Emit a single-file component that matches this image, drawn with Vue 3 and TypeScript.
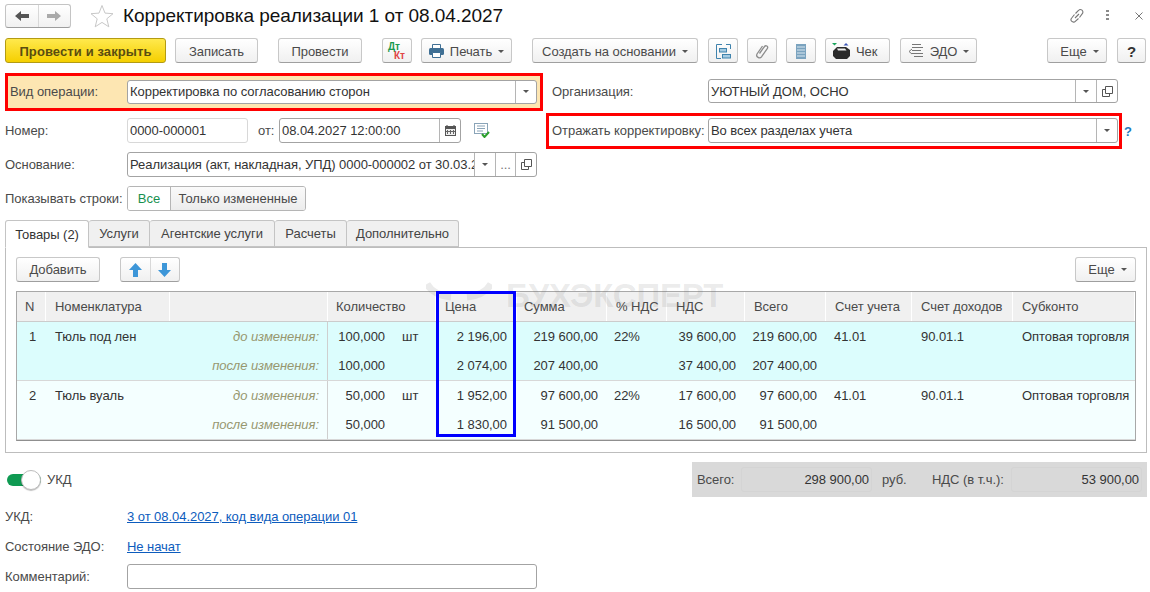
<script setup lang="ts">
interface Line {
  mark: string
  qty: string
  unit: string
  price: string
  sum: string
  rate: string
  vat: string
  total: string
  acc: string
  inc: string
  sub: string
}

const headers = ['N', 'Номенклатура', '', 'Количество', 'Цена', 'Сумма', '% НДС', 'НДС', 'Всего', 'Счет учета', 'Счет доходов', 'Субконто']

const rows: { n: string; name: string; lines: Line[] }[] = [
  {
    n: '1',
    name: 'Тюль под лен',
    lines: [
      { mark: 'до изменения:', qty: '100,000', unit: 'шт', price: '2 196,00', sum: '219 600,00', rate: '22%', vat: '39 600,00', total: '219 600,00', acc: '41.01', inc: '90.01.1', sub: 'Оптовая торговля' },
      { mark: 'после изменения:', qty: '100,000', unit: '', price: '2 074,00', sum: '207 400,00', rate: '', vat: '37 400,00', total: '207 400,00', acc: '', inc: '', sub: '' },
    ],
  },
  {
    n: '2',
    name: 'Тюль вуаль',
    lines: [
      { mark: 'до изменения:', qty: '50,000', unit: 'шт', price: '1 952,00', sum: '97 600,00', rate: '22%', vat: '17 600,00', total: '97 600,00', acc: '41.01', inc: '90.01.1', sub: 'Оптовая торговля' },
      { mark: 'после изменения:', qty: '50,000', unit: '', price: '1 830,00', sum: '91 500,00', rate: '', vat: '16 500,00', total: '91 500,00', acc: '', inc: '', sub: '' },
    ],
  },
]

const tabs = ['Товары (2)', 'Услуги', 'Агентские услуги', 'Расчеты', 'Дополнительно']
</script>

<template>
  <div class="page">
    <header class="title-row">
      <div class="nav">
        <button class="nav-btn">
          <svg width="14" height="12" viewBox="0 0 14 12"><path d="M0 6 6 1v3h8v4H6v3z" fill="#555" /></svg>
        </button>
        <button class="nav-btn">
          <svg width="14" height="12" viewBox="0 0 14 12"><path d="M14 6 8 1v3H0v4h8v3z" fill="#aaa" /></svg>
        </button>
      </div>
      <svg class="star" width="24" height="24" viewBox="0 0 24 24"><path d="M12 1.500l3 7.600 8 .6-6.200 5.100 2 8-6.800-4.400-6.800 4.400 2-8L1 9.700l8-.6z" fill="#fff" stroke="#c8c8c8" /></svg>
      <h1>Корректировка реализации 1 от 08.04.2027</h1>
      <div class="win-icons">
        <svg width="16" height="16" viewBox="0 0 16 16" fill="none" stroke="#777" stroke-width="1.100"><path d="M6 10 10 6M6.500 5.500 9.500 2.500a2.400 2.400 0 0 1 3.800 3.200L10.500 9.500M5.500 6.500 2.700 10a2.400 2.400 0 0 0 3.600 3.300L9.500 10.500" /></svg>
        <svg class="dots" width="4" height="14" viewBox="0 0 4 14" fill="#8a8a8a"><rect y="1" width="3" height="2" /><rect y="5" width="3" height="2" /><rect y="9" width="3" height="2" /></svg>
        <svg width="10" height="10" viewBox="0 0 10 10" stroke="#777" fill="none"><path d="M1.500 1.500l7 7M8.500 1.500l-7 7" /></svg>
      </div>
    </header>

    <div class="toolbar">
      <button class="btn primary">Провести и закрыть</button>
      <button class="btn w-zap">Записать</button>
      <button class="btn w-prov">Провести</button>
      <button class="btn w-dt">
        <span class="dtkt"><i class="dt">Дт</i><i class="kt">Кт</i></span>
      </button>
      <button class="btn w-print">
        <svg width="15" height="14" viewBox="0 0 15 14"><path d="M3.500.5h8v5h-8z" fill="#fff" stroke="#3f6f94" /><rect y="4" width="15" height="7" rx="1.500" fill="#3f6f94" /><path d="M3.500 8.500h8v5h-8z" fill="#fff" stroke="#3f6f94" /></svg>
        Печать <span class="caret"></span>
      </button>
      <button class="btn w-create">Создать на основании <span class="caret"></span></button>
      <button class="btn icon first-icon">
        <svg width="15" height="15" viewBox="0 0 15 15" fill="none" stroke="#3f83ad"><path d="M6 .5H.5v14H5M10 .5h4.500V5" /><rect x="3.500" y="4.500" width="7" height="3.500" fill="#a5cbe2" /><rect x="6.500" y="10.500" width="8" height="3.500" fill="#a5cbe2" /></svg>
      </button>
      <button class="btn icon">
        <svg width="14" height="15" viewBox="0 0 14 15" fill="none" stroke="#8c8c8c" stroke-width="1.300"><path d="M4.500 9.500 9.500 2.500c1.300-1.700 4-.2 2.900 1.900L6.500 12.800c-1.700 2.300-6 .3-4.500-2.800L7.500 2" /></svg>
      </button>
      <button class="btn icon">
        <svg width="10" height="15" viewBox="0 0 10 15"><rect width="10" height="15" fill="#7ba3bf" /><path d="M1 3h8M1 6h8M1 9h8M1 12h8" stroke="#dbe8f1" /></svg>
      </button>
      <button class="btn w-chek">
        <svg width="18" height="16" viewBox="0 0 18 16"><path d="M0 0h5L2.500 2.500z" fill="#19a55c" /><path d="M11.500 2.500 14 0l2.500 2.500z" fill="#3a55b5" /><path d="M1 8l4-4h9l4 3v6l-3 3H4L1 13z" fill="#2b2b2b" /><path d="M5 5.500h8l1.500 2H6z" fill="#eee" /></svg>
        Чек
      </button>
      <button class="btn w-edo">
        <svg width="16" height="14" viewBox="0 0 16 14" fill="none" stroke="#777"><path d="M4 .5h9M4 3.500h11M4 6.500h9M4 9.500h11M6 12.500h9M4 5 1 7.500 4 10" /></svg>
        ЭДО <span class="caret"></span>
      </button>
      <button class="btn w-more">Еще <span class="caret"></span></button>
      <button class="btn w-help">?</button>
    </div>

    <div class="form-top">
      <div class="col-left">
        <div class="red-box op">
          <label class="lbl in-box">Вид операции:</label>
          <div class="field w-op">
            <span class="val">Корректировка по согласованию сторон</span>
            <span class="cell"><span class="caret"></span></span>
          </div>
        </div>
        <div class="row">
          <label class="lbl">Номер:</label>
          <div class="field ro w-num"><span class="val">0000-000001</span></div>
          <label class="lbl-from">от:</label>
          <div class="field w-date">
            <span class="val">08.04.2027 12:00:00</span>
            <span class="cell">
              <svg width="11" height="11" viewBox="0 0 11 11"><path d="M2 0v2M9 0v2" stroke="#444" /><rect y="1" width="11" height="10" fill="#555" /><rect x="1" y="4" width="9" height="6" fill="#eee" /><path d="M2.500 5v4M5.500 5v4M8.500 5v4M1 6.500h9" stroke="#666" /></svg>
            </span>
          </div>
          <svg class="doc-ok" width="17" height="15" viewBox="0 0 17 15"><rect x="0.500" y="0.500" width="13" height="10" fill="#fff" stroke="#8aa4b8" /><path d="M3 3h8M3 5.500h8M3 8h6" stroke="#8aa4b8" /><path d="M8 11l2.500 3L15 9" fill="none" stroke="#2ca02c" stroke-width="2" /></svg>
        </div>
        <div class="row">
          <label class="lbl">Основание:</label>
          <div class="field w-op">
            <span class="val clip">Реализация (акт, накладная, УПД) 0000-000002 от 30.03.2027</span>
            <span class="cell"><span class="caret"></span></span>
            <span class="cell dots-cell">...</span>
            <span class="cell"><svg width="11" height="11" viewBox="0 0 11 11" fill="none" stroke="#555"><path d="M3.500.5h7v7h-7zM3.500 3.500h-3v7h7v-3" /></svg></span>
          </div>
        </div>
        <div class="row">
          <label class="lbl">Показывать строки:</label>
          <div class="segment">
            <span class="seg on">Все</span>
            <span class="seg off">Только измененные</span>
          </div>
        </div>
      </div>

      <div class="col-right">
        <div class="row org">
          <label class="lbl lbl-r">Организация:</label>
          <div class="field w-org">
            <span class="val">УЮТНЫЙ ДОМ, ОСНО</span>
            <span class="cell"><span class="caret"></span></span>
            <span class="cell"><svg width="11" height="11" viewBox="0 0 11 11" fill="none" stroke="#555"><path d="M3.500.5h7v7h-7zM3.500 3.500h-3v7h7v-3" /></svg></span>
          </div>
        </div>
        <div class="red-line">
          <div class="red-box refl">
            <label class="lbl lbl-r2">Отражать корректировку:</label>
            <div class="field w-org">
              <span class="val">Во всех разделах учета</span>
              <span class="cell"><span class="caret"></span></span>
            </div>
          </div>
          <span class="hint">?</span>
        </div>
      </div>
    </div>

    <div class="tabs">
      <span v-for="(t, i) in tabs" :key="t" class="tab" :class="{ active: i === 0 }">{{ t }}</span>
    </div>

    <section class="panel">
      <div class="panel-bar">
        <button class="btn w-add">Добавить</button>
        <div class="arrows">
          <span class="arrow">
            <svg width="13" height="14" viewBox="0 0 13 14"><path d="M6.500 0 13 7H9v7H4V7H0z" fill="#3d96d8" /></svg>
          </span>
          <span class="arrow">
            <svg width="13" height="14" viewBox="0 0 13 14"><path d="M6.500 14 13 7H9V0H4v7H0z" fill="#3d96d8" /></svg>
          </span>
        </div>
        <button class="btn w-more2">Еще <span class="caret"></span></button>
      </div>

      <div class="table">
        <div class="thead grid">
          <div v-for="(h, i) in headers" :key="i" class="th" :class="'c' + i">{{ h }}</div>
        </div>
        <div v-for="(r, ri) in rows" :key="r.n" class="tbody" :class="ri === 0 ? 'row-a' : 'row-b'">
          <div v-for="(l, li) in r.lines" :key="li" class="grid line">
            <div class="td num-n">{{ li === 0 ? r.n : '' }}</div>
            <div class="td name">{{ li === 0 ? r.name : '' }}</div>
            <div class="td mark">{{ l.mark }}</div>
            <div class="td qty"><span class="q">{{ l.qty }}</span><span class="u">{{ l.unit }}</span></div>
            <div class="td r price">{{ l.price }}</div>
            <div class="td r">{{ l.sum }}</div>
            <div class="td rate">{{ l.rate }}</div>
            <div class="td r">{{ l.vat }}</div>
            <div class="td r">{{ l.total }}</div>
            <div class="td acc">{{ l.acc }}</div>
            <div class="td acc2">{{ l.inc }}</div>
            <div class="td acc2">{{ l.sub }}</div>
          </div>
        </div>
        <div class="watermark">
          <svg width="66" height="22" viewBox="0 0 66 22" fill="none" stroke="#6e6e6e" stroke-opacity="0.14" stroke-width="7">
            <path d="M1 4c5 9 14 12 24 13M65 4c-5 9-14 12-24 13" />
          </svg>
          <span>БУХЭКСПЕРТ</span>
        </div>
        <div class="blue-box"></div>
      </div>
    </section>

    <div class="bottom">
      <div class="ukd-toggle">
        <span class="switch"><span class="knob"></span></span>
        <span class="lbl-ukd">УКД</span>
      </div>
      <div class="totals">
        <span class="t-lbl">Всего:</span>
        <span class="t-val">298 900,00</span>
        <span class="t-cur">руб.</span>
        <span class="t-lbl t-vat">НДС (в т.ч.):</span>
        <span class="t-val">53 900,00</span>
      </div>
    </div>

    <div class="row foot first">
      <label class="lbl">УКД:</label>
      <a class="link">3 от 08.04.2027, код вида операции 01</a>
    </div>
    <div class="row foot">
      <label class="lbl">Состояние ЭДО:</label>
      <a class="link">Не начат</a>
    </div>
    <div class="row foot">
      <label class="lbl">Комментарий:</label>
      <div class="field w-op"></div>
    </div>
  </div>
</template>

<style>
html,
body {
  margin: 0;
  background: #fff;
}
</style>

<style scoped>
.page {
  width: 1150px;
  height: 592px;
  overflow: hidden;
  box-sizing: border-box;
  padding: 4px 3px 0 5px;
  font-family: "Liberation Sans", Arial, sans-serif;
  font-size: 13px;
  color: #4a4a4a;
  letter-spacing: -0.05px;
}

button {
  font: inherit;
  letter-spacing: inherit;
}

.title-row {
  display: flex;
  align-items: center;
  height: 24px;
}

.nav {
  display: flex;
  width: 66px;
  height: 24px;
  box-sizing: border-box;
  border: 1px solid #c4c4c4;
  border-bottom-color: #9d9d9d;
  border-radius: 3px;
  background: linear-gradient(#fff, #f1f1f1);
}

.nav-btn {
  flex: 1;
  display: flex;
  align-items: center;
  justify-content: center;
  padding: 0;
  border: none;
  background: none;
}

.nav-btn + .nav-btn {
  border-left: 1px solid #d8d8d8;
}

.star {
  margin-left: 19px;
}

h1 {
  margin: 0 0 0 9px;
  font-size: 19px;
  font-weight: 400;
  color: #111;
  letter-spacing: -0.05px;
}

.win-icons {
  margin-left: auto;
  display: flex;
  align-items: center;
  gap: 24px;
  padding-right: 3px;
}

.dots {
  margin-left: -3px;
}

.toolbar {
  display: flex;
  margin-top: 10px;
  height: 25px;
}

.toolbar .btn {
  padding-top: 1px;
}

.btn {
  height: 25px;
  box-sizing: border-box;
  display: inline-flex;
  align-items: center;
  justify-content: center;
  gap: 6px;
  padding: 0;
  border: 1px solid #c8c8c8;
  border-bottom-color: #9f9f9f;
  border-radius: 3px;
  background: linear-gradient(#fff, #f0f0f0);
  color: #4a4a4a;
  flex: none;
}

.primary {
  width: 161px;
  border-color: #b39b13;
  background: linear-gradient(#ffe94d, #f5cf00);
  color: #5a4d10;
  font-weight: 700;
  letter-spacing: 0.1px;
}

.w-zap { width: 83px; margin-left: 9px; }
.w-prov { width: 84px; margin-left: 20px; }
.w-dt { width: 30px; margin-left: 20px; }
.w-print { width: 91px; margin-left: 9px; }
.w-create { width: 166px; margin-left: 20px; }
.icon { width: 30px; margin-left: 9px; }
.first-icon { margin-left: 10px; }
.w-chek { width: 65px; margin-left: 9px; justify-content: flex-start; padding-left: 6px; }
.w-edo { width: 77px; margin-left: 10px; }
.toolbar .w-more { width: 60px; margin-left: auto; padding-left: 5px; }
.w-help { width: 29px; margin-left: 10px; margin-right: 1px; font-weight: 700; font-size: 15px; color: #333; }

.dtkt {
  display: flex;
  flex-direction: column;
  font-size: 10px;
  line-height: 9px;
  font-weight: 700;
  letter-spacing: 0;
}

.dtkt i { font-style: normal; }
.dt { color: #1a9a50; margin-left: -6px; }
.kt { color: #e04545; margin-left: 5px; }

.caret {
  display: inline-block;
  width: 0;
  height: 0;
  border: 3px solid transparent;
  border-top: 3px solid #555;
  border-bottom: 0;
}

.form-top {
  display: flex;
  margin-top: 10px;
}

.col-left {
  width: 538px;
  flex: none;
  display: flex;
  flex-direction: column;
  gap: 9px;
}

.red-box {
  border: 3px solid #f00;
  box-sizing: border-box;
  display: flex;
  align-items: center;
  padding-bottom: 1px;
}

.op {
  height: 38px;
  width: 538px;
  background: #fde6b2;
  margin-bottom: -2px;
}

.op .field { height: 24px; }

.row {
  display: flex;
  align-items: center;
  height: 25px;
}

.lbl {
  width: 122px;
  flex: none;
  white-space: nowrap;
}

.in-box {
  width: 117px;
  margin-left: 2px;
}

.field {
  height: 25px;
  box-sizing: border-box;
  display: flex;
  align-items: center;
  background: #fff;
  border: 1px solid #a3a3a3;
  border-radius: 3px;
  color: #333;
  overflow: hidden;
}

.val {
  flex: 1;
  min-width: 0;
  padding-left: 2px;
  white-space: nowrap;
  overflow: hidden;
}

.cell {
  flex: none;
  width: 20px;
  height: 100%;
  display: flex;
  align-items: center;
  justify-content: center;
  border-left: 1px solid #b5b5b5;
}

.dots-cell {
  align-items: flex-end;
  padding-bottom: 6px;
  box-sizing: border-box;
  color: #777;
  line-height: 10px;
}

.w-op { width: 410px; }
.w-num { width: 121px; }
.ro { border-color: #d8d8d8; }
.lbl-from { margin-left: 10px; width: 21px; flex: none; }
.w-date { width: 182px; }
.doc-ok { margin-left: 13px; }

.segment {
  display: flex;
  height: 25px;
  box-sizing: border-box;
  border: 1px solid #b5b5b5;
  border-radius: 3px;
  overflow: hidden;
}

.seg {
  display: flex;
  align-items: center;
  justify-content: center;
}

.on { width: 42px; color: #18914f; background: #fff; }

.off {
  width: 134px;
  border-left: 1px solid #b5b5b5;
  background: linear-gradient(#fafafa, #ececec);
}

.col-right {
  margin-left: 3px;
  flex: 1;
  display: flex;
  flex-direction: column;
}

.org {
  margin-top: 6px;
  height: 24px;
}

.org .field { height: 24px; }

.lbl-r { width: 156px; margin-left: 6px; }

.w-org { width: 410px; }

.red-line {
  display: flex;
  align-items: center;
  margin-top: 10px;
}

.refl {
  width: 576px;
  height: 36px;
  padding-left: 3px;
}

.lbl-r2 { width: 156px; }

.hint {
  margin-left: 2px;
  color: #1f7cc0;
  font-weight: 700;
  font-size: 13px;
}

.tabs {
  display: flex;
  margin-top: 9px;
  height: 28px;
  position: relative;
  z-index: 1;
  margin-bottom: -1px;
}

.tab {
  box-sizing: border-box;
  height: 27px;
  display: flex;
  align-items: center;
  justify-content: center;
  border: 1px solid #c4c4c4;
  border-left: none;
  border-radius: 3px 3px 0 0;
  background: #f0f0f0;
  color: #444;
}

.tab:nth-child(1) { width: 84px; }
.tab:nth-child(2) { width: 61px; }
.tab:nth-child(3) { width: 125px; }
.tab:nth-child(4) { width: 72px; }
.tab:nth-child(5) { width: 112px; }

.tab.active {
  height: 28px;
  background: #fff;
  border-left: 1px solid #c4c4c4;
  border-bottom-color: #fff;
  color: #333;
}

.panel {
  box-sizing: border-box;
  height: 206px;
  width: 1142px;
  border: 1px solid #bdbdbd;
  padding: 9px 10px 0;
}

.panel-bar {
  display: flex;
  align-items: center;
  height: 25px;
}

.w-add { width: 84px; }
.w-more2 { width: 61px; margin-left: auto; padding-left: 4px; }

.arrows {
  margin-left: 20px;
  display: flex;
  width: 60px;
  height: 25px;
  box-sizing: border-box;
  border: 1px solid #c8c8c8;
  border-bottom-color: #9f9f9f;
  border-radius: 3px;
  background: linear-gradient(#fff, #f0f0f0);
}

.arrow {
  flex: 1;
  display: flex;
  align-items: center;
  justify-content: center;
}

.arrow + .arrow {
  border-left: 1px solid #d8d8d8;
}

.table {
  position: relative;
  margin-top: 9px;
  height: 150px;
  box-sizing: border-box;
  border: 1px solid #a8a8a8;
  border-bottom-color: #8f8f8f;
}

.watermark {
  position: absolute;
  left: 409px;
  top: -12px;
  display: flex;
  align-items: flex-start;
  gap: 14px;
  pointer-events: none;
}

.watermark span {
  font-size: 33px;
  font-weight: 700;
  line-height: 32px;
  letter-spacing: -0.2px;
  color: rgba(110, 110, 110, 0.14);
  white-space: nowrap;
}

.grid {
  display: grid;
  grid-template-columns: 29px 124px 158px 108px 81px 90px 60px 78px 81px 86px 101px 122px;
}

.thead {
  position: relative;
  height: 30px;
  background: #f0f0f0;
  border-bottom: 1px solid #ccc;
  box-sizing: border-box;
}

.th {
  display: flex;
  align-items: center;
  padding-left: 9px;
  border-right: 1px solid #fff;
  white-space: nowrap;
  min-width: 0;
  overflow: hidden;
  box-sizing: border-box;
}

.c0 { padding-left: 8px; }
.c3 { padding-left: 8px; }
.c5 { padding-left: 7px; }

.tbody {
  position: relative;
  border-bottom: 1px solid #d8d8d8;
  box-sizing: border-box;
}

.row-a { background: #dcfdfd; }
.row-b { background: #f4ffff; }

.line {
  height: 29px;
  color: #333;
}

.td {
  display: flex;
  align-items: center;
  min-width: 0;
  white-space: nowrap;
  box-sizing: border-box;
}

.num-n { justify-content: center; padding-left: 2px; }
.name { padding-left: 9px; }
.mark { justify-content: flex-end; padding-right: 8px; font-style: italic; color: #97976f; border-right: 1px solid #cfcfcf; }
.q { width: 57px; text-align: right; }
.u { margin-left: 17px; }
.r { justify-content: flex-end; padding-right: 9px; }
.price { padding-right: 10px; }
.rate { padding-left: 7px; }
.acc { padding-left: 8px; }
.acc2 { padding-left: 9px; }

.blue-box {
  position: absolute;
  left: 419px;
  top: -1px;
  width: 80px;
  height: 146px;
  box-sizing: border-box;
  border: 3px solid #00f;
}

.bottom {
  display: flex;
  align-items: center;
  justify-content: space-between;
  margin-top: 9px;
  width: 1142px;
  height: 35px;
}

.ukd-toggle {
  display: flex;
  align-items: center;
  margin-left: 2px;
}

.switch {
  display: block;
  position: relative;
  width: 34px;
  height: 12px;
  margin: 0 6px 0 0;
  background: #0f9a52;
  border-radius: 6px;
}

.knob {
  position: absolute;
  right: 0;
  top: -4px;
  width: 20px;
  height: 20px;
  box-sizing: border-box;
  background: #fff;
  border: 1px solid #bdbdbd;
  border-radius: 50%;
  box-shadow: 0 1px 1px rgba(0, 0, 0, 0.25);
}

.totals {
  width: 455px;
  height: 35px;
  box-sizing: border-box;
  background: #d9d9d9;
  display: flex;
  align-items: center;
  padding: 0 5px;
}

.t-lbl { width: 44px; flex: none; }
.t-vat { width: 79px; white-space: nowrap; }

.t-val {
  box-sizing: border-box;
  width: 131px;
  height: 25px;
  display: flex;
  align-items: center;
  justify-content: flex-end;
  padding-right: 2px;
  border: 1px solid #d4d4d4;
  border-radius: 3px;
  color: #333;
}

.t-cur { width: 60px; padding-left: 10px; box-sizing: border-box; }

.foot { margin-top: 5px; }
.first { margin-top: 7px; }

.link {
  color: #0d5cbd;
  text-decoration: underline;
}
</style>
